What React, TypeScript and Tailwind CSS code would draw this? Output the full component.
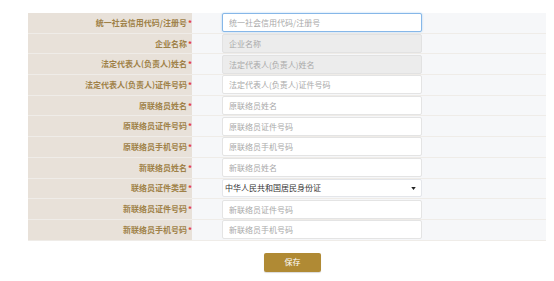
const rows: { label: string; placeholder: string; kind?: 'focus' | 'disabled' | 'select' }[] = [
  { label: '统一社会信用代码/注册号', placeholder: '统一社会信用代码/注册号', kind: 'focus' },
  { label: '企业名称', placeholder: '企业名称', kind: 'disabled' },
  { label: '法定代表人(负责人)姓名', placeholder: '法定代表人(负责人)姓名', kind: 'disabled' },
  { label: '法定代表人(负责人)证件号码', placeholder: '法定代表人(负责人)证件号码' },
  { label: '原联络员姓名', placeholder: '原联络员姓名' },
  { label: '原联络员证件号码', placeholder: '原联络员证件号码' },
  { label: '原联络员手机号码', placeholder: '原联络员手机号码' },
  { label: '新联络员姓名', placeholder: '新联络员姓名' },
  { label: '联络员证件类型', placeholder: '中华人民共和国居民身份证', kind: 'select' },
  { label: '新联络员证件号码', placeholder: '新联络员证件号码' },
  { label: '新联络员手机号码', placeholder: '新联络员手机号码' },
];

const Field = ({ placeholder, kind }: { placeholder: string; kind?: string }) => {
  if (kind === 'select') {
    return (
      <div className="w-[200px] h-[18px] bg-white border border-[#e4e6ea] rounded-[2px] flex items-center justify-between pl-[2px] pr-[5px] text-[8px] text-[#333]">
        <span>{placeholder}</span>
        <svg width="5" height="3" viewBox="0 0 6 4"><path d="M0 0h6L3 4z" fill="#222" /></svg>
      </div>
    );
  }
  const base = 'w-[200px] h-[19px] rounded-[2px] border px-[6px] text-[8px] outline-none placeholder:text-[#a9a9a9]';
  const look =
    kind === 'focus'
      ? 'bg-white border-[#86b7e8] shadow-[0_0_2px_rgba(102,175,233,0.6)]'
      : kind === 'disabled'
        ? 'bg-[#ececec] border-[#e2e2e2]'
        : 'bg-white border-[#e4e4e4]';
  return <input className={`${base} ${look}`} placeholder={placeholder} disabled={kind === 'disabled'} readOnly />;
};

const App = () => {
  return (
    <div className="w-[554px] h-[281px] bg-white pt-[13px] pl-[28px]" style={{ fontFamily: '"Noto Sans CJK SC", "Noto Sans", sans-serif' }}>
      <div className="w-[518px] flex flex-col">
        {rows.map(r => (
          <div key={r.label} className="flex h-[20.7px] border-b border-[#efece8]">
            <div className="w-[164px] bg-[#e8e1d9] flex items-center justify-end text-[8px] font-bold text-[#9f8148]">
              {r.label}
              <span className="text-[#e4393c] ml-[1px]">*</span>
            </div>
            <div className="flex-1 bg-[#f6f7f9] flex items-center pl-[30px]">
              <Field placeholder={r.placeholder} kind={r.kind} />
            </div>
          </div>
        ))}
      </div>
      <div className="flex pl-[236px] mt-[12px]">
        <button className="w-[57px] h-[19px] bg-[#b08a34] rounded-[2px] text-white text-[8px] shadow-[0_1px_1px_rgba(0,0,0,0.15)]">保存</button>
      </div>
    </div>
  );
};

export default App;
